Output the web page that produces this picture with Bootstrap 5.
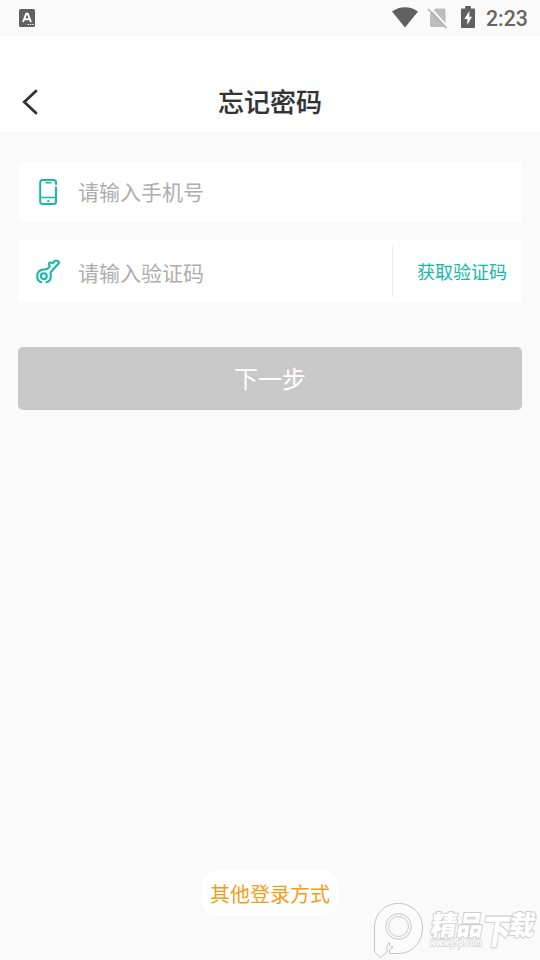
<!DOCTYPE html>
<html lang="zh-CN">
<head>
<meta charset="utf-8">
<meta name="viewport" content="width=device-width, initial-scale=1">
<title>忘记密码</title>
<link href="https://cdn.jsdelivr.net/npm/bootstrap@5.3.0/dist/css/bootstrap.min.css" rel="stylesheet">
<style>
body{background:#fafafa;font-family:Roboto,"Noto Sans CJK SC",sans-serif;height:960px;overflow:hidden}
svg{display:block;flex:none}
.status-bar{height:36px;padding:0 12px 0 19px;color:#666}
.battery{margin:-2px 11px 0 12px}
.wifi{margin:-2px 1px 0 0}
.clock{font-size:21.3px;font-weight:500;line-height:36px;width:42px;white-space:nowrap;padding-top:1px}
.title-bar{height:96px;padding:36px 22px 0 22px}
.title-bar h1{font-size:26px;font-weight:500;color:#333;line-height:60px;-webkit-text-stroke:.2px #333;padding-top:2px}
.back{color:#333;width:20px}
.fields{padding:30px 18px 0}
.field{border-radius:5px;background:#fff;padding-left:18px}
.phone-field{height:60px}
.code-field{height:63px;margin-top:18px}
.field .form-control{font-size:21px;line-height:30px;color:#333;margin:2px 0 0 18px;height:44px}
.code-field .form-control{margin-top:4px}
.field .form-control::placeholder{color:#aeaeae;opacity:1}
.teal{color:#16b8aa}
.get-code{font-size:18px;border-left:1px solid #eee;height:51px;width:130px;padding:1px 15px 0 24px;line-height:52px;white-space:nowrap}
.next{height:63px;margin-top:44px;border-radius:5px;font-size:24px;color:#fff;background:#c8c8c8;border:0}
.next span{padding-top:3px}
.next:disabled{color:#fff;background:#c8c8c8;opacity:1}
.other{font-size:20px;color:#f0a018;background:#fff;height:46px;width:138px;border-radius:18px;line-height:50px;margin-bottom:44px}
.watermark{position:absolute;left:373px;top:902px;width:167px;height:58px}
.watermark text{fill:#fff;stroke:#cdcdcd;stroke-width:2px;stroke-linejoin:round;paint-order:stroke;font-family:"Noto Sans CJK SC",sans-serif;font-weight:900}
.watermark .site{stroke-width:1.300px;font-family:"Open Sans",sans-serif;font-weight:700;font-style:italic}
</style>
</head>
<body class="d-flex flex-column position-relative">
<div class="status-bar d-flex align-items-center">
  <svg width="16" height="18" viewBox="0 0 16 18"><rect width="16" height="18" rx="1.500" fill="#616161"/><path d="M4 13 7.200 4.800h1.600L12 13M5.300 10.300h5.400" fill="none" stroke="#fff" stroke-width="1.900"/><path d="M8.500 15.500h1.400m1 0h1.400m1 0h1.400" stroke="#fff" stroke-width="1.200"/></svg>
  <svg class="wifi ms-auto" width="26" height="21" viewBox="0 0 26 21"><path d="M0 4.500C7.500-1.300 18.500-1.300 26 4.500L13 20.500z" fill="#616161"/></svg>
  <svg width="22" height="22" viewBox="0 0 22 22" class="ms-2"><path d="M8.500 1.500H17Q18.500 1.500 18.500 3V20H4.500Q3 20 3 18.500V7z" fill="#bdbdbd"/><path d="M3.200.6 22 21.400" stroke="#fafafa" stroke-width="2"/><path d="M1 2 19.500 21.200" stroke="#b4b4b4" stroke-width="1.800"/></svg>
  <svg class="battery" width="14" height="22" viewBox="0 0 14 22"><path d="M1 2.500H4.200V0H9.800V2.500H13Q14 2.500 14 3.500V21Q14 22 13 22H1Q0 22 0 21V3.500Q0 2.500 1 2.500z" fill="#616161"/><path d="M8.300 5 3.300 13H6.300V19L11 10.800H8.300z" fill="#fff"/></svg>
  <span class="clock">2:23</span>
</div>
<header class="title-bar bg-white d-flex align-items-center">
  <a href="#" class="back" aria-label="返回"><svg width="16" height="26" viewBox="0 0 16 26"><path d="M14 2 2.300 13 14 24" fill="none" stroke="currentColor" stroke-width="2.800" stroke-linecap="round"/></svg></a>
  <h1 class="mb-0 flex-grow-1 text-center">忘记密码</h1>
  <span class="back"></span>
</header>
<main class="fields">
  <div class="field phone-field d-flex align-items-center teal">
    <svg width="24" height="28" viewBox="0 0 24 28" fill="none" stroke="currentColor" stroke-width="2" stroke-linecap="round"><path d="M20 6V4.500Q20 2 17.700 2H6.600Q4.200 2 4.200 4.500V23.500Q4.200 26 6.600 26H17.700Q20 26 20 23.500V9.500"/><path d="M4.200 19.600H20M10 4.800H15" stroke-width="1.500"/><path d="M12.100 22.900H12.500"/></svg>
    <input class="form-control border-0 shadow-none bg-transparent p-0" type="tel" placeholder="请输入手机号">
  </div>
  <div class="field code-field d-flex align-items-center teal">
    <svg width="24" height="26" viewBox="0 0 24 26" fill="none" stroke="currentColor" stroke-width="2.100" stroke-linecap="round" stroke-linejoin="round"><path d="M5.200 23.200C2.600 22.300 1.200 20 1.200 17.200C1.200 13.300 4.200 10.400 7.800 10.500C9.500 10.500 10.900 10.300 12 9.200L13.800 7.300L13 5.300Q12.700 3.500 14.500 3.500L17 4.300L18.500 1.800H21C23 1.800 23.300 3.600 22.400 4.700L15 12.800C14.300 13.700 14.500 15 14.700 16.200C15.200 19.700 13.500 22.300 10.500 23.200"/><circle cx="7.800" cy="17.200" r="2.900"/></svg>
    <input class="form-control border-0 shadow-none bg-transparent p-0" type="text" placeholder="请输入验证码">
    <a href="#" class="get-code flex-shrink-0 teal text-decoration-none">获取验证码</a>
  </div>
  <button class="btn next w-100 d-flex align-items-center justify-content-center p-0" disabled><span>下一步</span></button>
</main>
<a href="#" class="other mt-auto mx-auto text-center text-decoration-none">其他登录方式</a>
<svg class="watermark" viewBox="0 0 167 58" aria-hidden="true">
  <path d="M1.500 26C1.500 11 12 1.500 25.500 1.500S49.500 12 49.500 26S39.500 51 26 51.500H16.500V48L20 45L16.500 43.500V40.500L14 43V50L7.500 55.500L1.500 50z" fill="#fcfcfc" stroke="#c4c4c4"/>
  <circle cx="25.500" cy="24.500" r="12.800" fill="#fafafa" stroke="#c4c4c4"/><circle cx="25.500" cy="24.500" r="10" fill="#fafafa" stroke="#cacaca"/>
  <g transform="skewX(-9)"><text x="62" y="33.500" font-size="27" textLength="52" lengthAdjust="spacingAndGlyphs">精品</text><text x="114" y="42.500" font-size="35" textLength="29" lengthAdjust="spacingAndGlyphs">下</text><text x="140" y="33.500" font-size="27" textLength="26" lengthAdjust="spacingAndGlyphs">载</text></g>
  <text class="site" x="57" y="44" font-size="10" textLength="52" lengthAdjust="spacingAndGlyphs">www.j9p.com</text>
</svg>
<script src="https://cdn.jsdelivr.net/npm/bootstrap@5.3.0/dist/js/bootstrap.bundle.min.js"></script>
</body>
</html>
